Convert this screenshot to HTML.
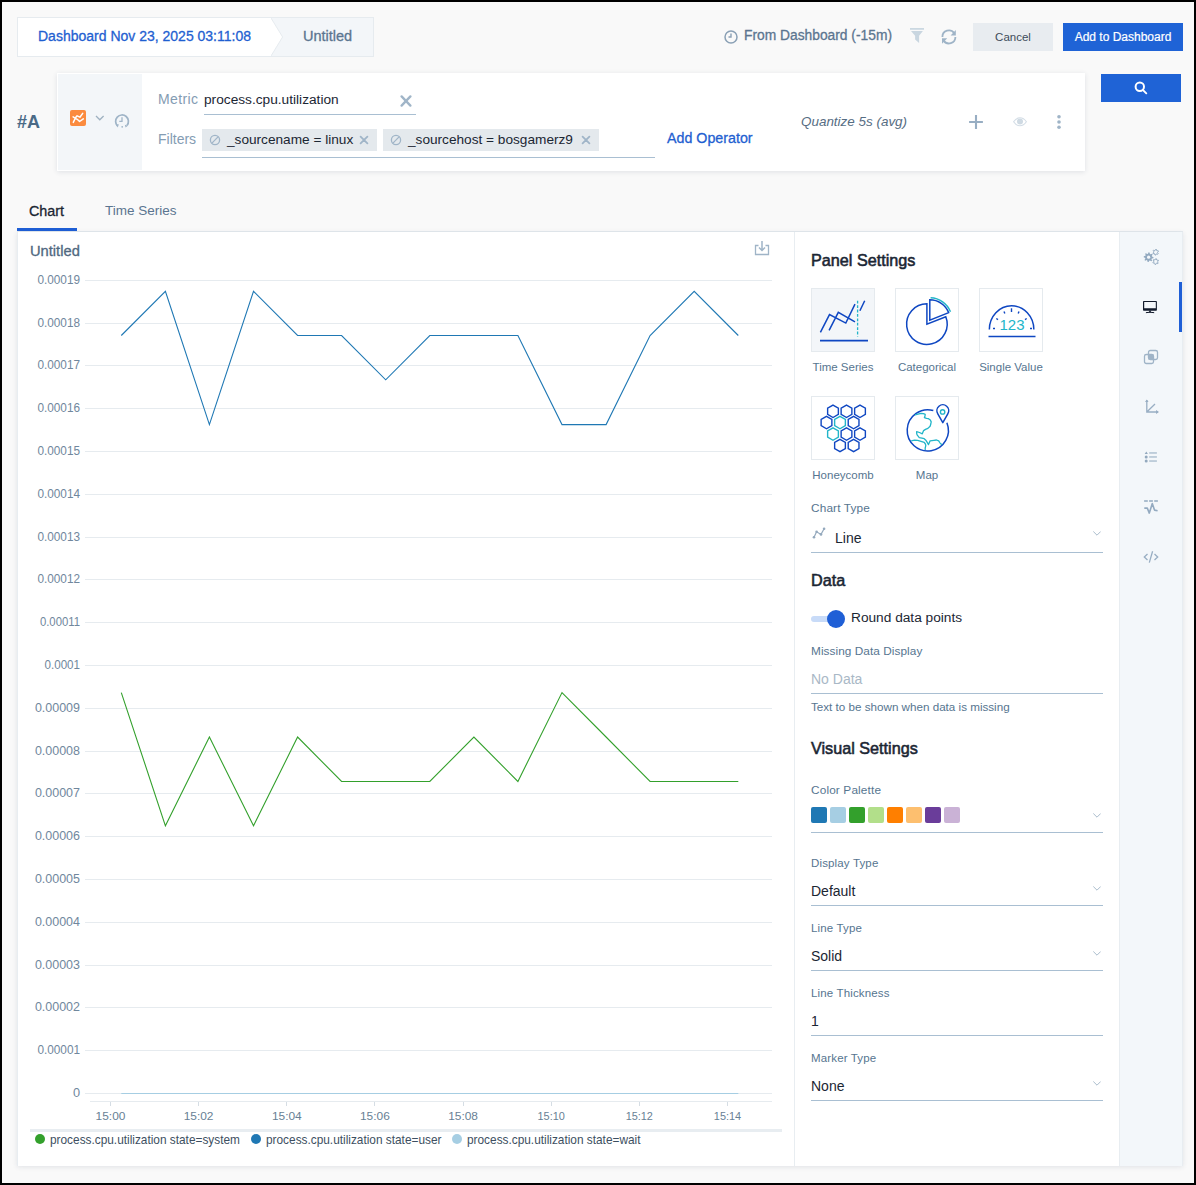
<!DOCTYPE html>
<html><head><meta charset="utf-8">
<style>
*{box-sizing:border-box;margin:0;padding:0}
html,body{width:1196px;height:1185px;overflow:hidden}
body{font-family:"Liberation Sans",sans-serif;background:#000;position:relative}
#frame{position:absolute;left:2px;top:2px;width:1192px;height:1181px;background:#f9f9f9;overflow:hidden}
.a{position:absolute;white-space:nowrap}
.m{-webkit-text-stroke:0.3px currentColor}
</style></head>
<body>
<div id="frame"></div>
<div class="a" id="root" style="left:0;top:0;width:1196px;height:1185px">

<!-- breadcrumb -->
<div class="a" style="left:17px;top:17px;width:357px;height:40px;background:#fff;border:1px solid #e6ebef"></div>
<svg class="a" style="left:271px;top:18px" width="102" height="38"><polygon points="0,0 102,0 102,38 0,38 11.6,19" fill="#f3f6f9"/><polyline points="0,0 11.6,19 0,38" fill="none" stroke="#e6ebef" stroke-width="1"/></svg>
<div class="a m" style="left:38px;top:27px;font-size:14px;color:#1f5fd1;line-height:18px">Dashboard Nov 23, 2025 03:11:08</div>
<div class="a m" style="left:303px;top:27px;font-size:14.5px;color:#5b7590;line-height:18px">Untitled</div>

<!-- top right -->
<svg class="a" style="left:724px;top:30px" width="14" height="14" viewBox="0 0 14 14"><circle cx="7" cy="7" r="6" fill="none" stroke="#8aa0b5" stroke-width="1.5"/><path d="M7 3.5V7H4.5" fill="none" stroke="#8aa0b5" stroke-width="1.4"/></svg>
<div class="a m" style="left:744px;top:27px;font-size:13.8px;color:#5b7590;line-height:18px">From Dashboard (-15m)</div>
<svg class="a" style="left:895px;top:20px" width="75" height="35" viewBox="0 0 75 35">
<path d="M15 8.9H29" stroke="#c9d6e0" stroke-width="1.7"/>
<path d="M16 11H27.9L24.1 15.7V22.9L20.1 19.6V15.7Z" fill="#c9d6e0"/>
<path d="M47.40 16.90A6.5 6.5 0 0 1 59.22 13.17" fill="none" stroke="#9fb4c7" stroke-width="1.8"/>
<path d="M60.40 16.90A6.5 6.5 0 0 1 48.58 20.63" fill="none" stroke="#9fb4c7" stroke-width="1.8"/>
<path d="M60.8 10V15.4H55.6Z" fill="#9fb4c7"/>
<path d="M47 18.2V23.8L52.2 18.2Z" fill="#9fb4c7"/>
</svg>
<div class="a" style="left:973px;top:23px;width:80px;height:28px;background:#e8ecf0;color:#3d4b5a;font-size:11.5px;line-height:28px;text-align:center">Cancel</div>
<div class="a m" style="left:1063px;top:23px;width:120px;height:28px;background:#1f63d6;color:#fff;font-size:12px;line-height:28px;text-align:center;-webkit-text-stroke:0.2px #fff">Add to Dashboard</div>

<!-- query row -->
<div class="a" style="left:17px;top:113px;font-size:18px;font-weight:bold;color:#4a6a86;line-height:18px">#A</div>
<div class="a" style="left:57px;top:73px;width:1028px;height:98px;background:#fff;box-shadow:0 1px 5px rgba(30,50,80,0.12)"></div>
<div class="a" style="left:58px;top:74px;width:84px;height:96px;background:#f3f6f9"></div>
<div class="a" style="left:70px;top:110px;width:16px;height:16px;background:#fb8b3f;border-radius:2px"></div>
<svg class="a" style="left:70px;top:110px" width="16" height="16" viewBox="0 0 16 16"><path d="M3.3 12.4L5.5 7.8L7.1 5.8L9.9 7.2L12.7 3.4M3.1 6.9L5.5 8.4L7.2 9.3L9.6 11.5L13.3 8.9" fill="none" stroke="#fff" stroke-width="1.5" stroke-linecap="round" stroke-linejoin="round"/></svg>
<svg class="a" style="left:95px;top:115px" width="10" height="6" viewBox="0 0 10 6"><path d="M1 1L4.8 4.8L8.6 1" fill="none" stroke="#9fb1c1" stroke-width="1.3"/></svg>
<svg class="a" style="left:114px;top:113px" width="16" height="16" viewBox="0 0 16 16"><path d="M3.6 13A6.4 6.4 0 1 1 13 12.4" fill="none" stroke="#9fb4c7" stroke-width="1.7"/><path d="M1.6 11.5L4.8 11.2L3.8 14.4Z" fill="#9fb4c7"/><path d="M8 4.2V8.4H5.3" fill="none" stroke="#9fb4c7" stroke-width="1.3"/><circle cx="8.2" cy="13.8" r="0.9" fill="#9fb4c7"/><path d="M10.8 11.8L11.6 14.6L13.8 12.8Z" fill="#9fb4c7"/></svg>
<div class="a" style="left:158px;top:91px;font-size:14px;color:#849cb3;line-height:16px;letter-spacing:0.4px">Metric</div>
<div class="a" style="left:204px;top:92px;font-size:13.7px;color:#1b2633;line-height:16px">process.cpu.utilization</div>
<div class="a" style="left:204px;top:114px;width:212px;height:1px;background:#a9bfd2"></div>
<svg class="a" style="left:400px;top:95px" width="12" height="12" viewBox="0 0 12 12"><path d="M1.6 1.4L10.4 10.6M10.4 1.4L1.6 10.6" stroke="#a0b5c8" stroke-width="2.3" stroke-linecap="round"/></svg>

<div class="a" style="left:158px;top:131px;font-size:14px;color:#849cb3;line-height:16px">Filters</div>
<div class="a" style="left:202px;top:129px;width:175px;height:22px;background:#e4e9ed"></div>
<div class="a" style="left:383px;top:129px;width:216px;height:22px;background:#e4e9ed"></div>
<div class="a" style="left:202px;top:157px;width:453px;height:1px;background:#a9bfd2"></div>
<!-- query row right part -->
<div class="a" style="left:227px;top:132px;font-size:13.65px;color:#1b2633;line-height:16px">_sourcename = linux</div>
<div class="a" style="left:408px;top:132px;font-size:13.65px;color:#1b2633;line-height:16px">_sourcehost = bosgamerz9</div>
<svg class="a" style="left:209px;top:134px" width="12" height="12" viewBox="0 0 12 12"><circle cx="6" cy="6" r="4.6" fill="none" stroke="#a0b5c8" stroke-width="1.3"/><path d="M2.9 9.1L9.1 2.9" stroke="#a0b5c8" stroke-width="1.3"/></svg>
<svg class="a" style="left:390px;top:134px" width="12" height="12" viewBox="0 0 12 12"><circle cx="6" cy="6" r="4.6" fill="none" stroke="#a0b5c8" stroke-width="1.3"/><path d="M2.9 9.1L9.1 2.9" stroke="#a0b5c8" stroke-width="1.3"/></svg>
<svg class="a" style="left:359px;top:135px" width="10" height="10" viewBox="0 0 10 10"><path d="M1.6 1.6L8.4 8.4M8.4 1.6L1.6 8.4" stroke="#a0b5c8" stroke-width="1.8" stroke-linecap="round"/></svg>
<svg class="a" style="left:581px;top:135px" width="10" height="10" viewBox="0 0 10 10"><path d="M1.6 1.6L8.4 8.4M8.4 1.6L1.6 8.4" stroke="#a0b5c8" stroke-width="1.8" stroke-linecap="round"/></svg>
<div class="a m" style="left:667px;top:130px;font-size:14.25px;color:#1f5fd1;line-height:16px">Add Operator</div>
<div class="a" style="left:801px;top:114px;font-size:13.45px;font-style:italic;color:#566d83;line-height:16px">Quantize 5s (avg)</div>
<svg class="a" style="left:968px;top:114px" width="16" height="16" viewBox="0 0 16 16"><path d="M8 1.1V14.9M1.1 8H14.9" stroke="#98aec3" stroke-width="2.1"/></svg>
<svg class="a" style="left:1012px;top:116px" width="16" height="12" viewBox="0 0 16 12"><path d="M1.6 5.8C3.5 3 5.6 1.8 8 1.8S12.5 3 14.4 5.8C12.5 8.6 10.4 9.8 8 9.8S3.5 8.6 1.6 5.8Z" fill="none" stroke="#d3dde6" stroke-width="1.1"/><circle cx="8" cy="5.6" r="3" fill="#cfdae3"/></svg>
<svg class="a" style="left:1056px;top:114px" width="6" height="16" viewBox="0 0 6 16"><circle cx="3" cy="2.7" r="1.8" fill="#9fb4c7"/><circle cx="3" cy="8" r="1.8" fill="#9fb4c7"/><circle cx="3" cy="13.3" r="1.8" fill="#9fb4c7"/></svg>
<div class="a" style="left:1101px;top:74px;width:80px;height:28px;background:#1f63d6"></div>
<svg class="a" style="left:1134px;top:81px" width="14" height="14" viewBox="0 0 14 14"><circle cx="5.8" cy="5.8" r="4.2" fill="none" stroke="#fff" stroke-width="2"/><path d="M8.8 8.8L12.3 12.3" stroke="#fff" stroke-width="1.9" stroke-linecap="round"/></svg>

<!-- tabs -->
<div class="a m" style="left:29px;top:203px;font-size:14.35px;color:#1b2633;line-height:16px">Chart</div>
<div class="a" style="left:105px;top:203px;font-size:13.5px;color:#5b7590;line-height:16px">Time Series</div>
<div class="a" style="left:17px;top:231px;width:1166px;height:1px;background:#e6ebef"></div>
<div class="a" style="left:17px;top:228px;width:60px;height:3px;background:#1f5fd6"></div>

<!-- main card -->
<div class="a" style="left:17px;top:232px;width:1166px;height:934px;background:#fff;box-shadow:0 1px 5px rgba(30,50,80,0.11);border-left:1px solid #e8edf1;border-right:1px solid #e8edf1"></div>
<div class="a" style="left:794px;top:232px;width:1px;height:934px;background:#e8edf1"></div>
<div class="a" style="left:1119px;top:232px;width:63px;height:934px;background:#f3f7fa;border-left:1px solid #e8edf1"></div>
<div class="a" style="left:1179px;top:282px;width:3px;height:50px;background:#1f5fd6"></div>

<div class="a m" style="left:30px;top:243px;font-size:14.7px;color:#4f6880;line-height:16px">Untitled</div>
<svg class="a" style="left:754px;top:240px" width="16" height="16" viewBox="0 0 16 16"><path d="M4.5 5.5H1.5V14.5H14.5V5.5H11.5" fill="none" stroke="#9fb4c7" stroke-width="1.3"/><path d="M8 1V10M5 7.5L8 10.5L11 7.5" fill="none" stroke="#9fb4c7" stroke-width="1.5"/></svg>
<svg class="a" style="left:0;top:0" width="1196" height="1185" viewBox="0 0 1196 1185">
<line x1="85" y1="1093.5" x2="772" y2="1093.5" stroke="#e6ebef" stroke-width="1"/>
<text x="80" y="1097" text-anchor="end" font-size="11.9" fill="#70879d" textLength="7.1" lengthAdjust="spacingAndGlyphs">0</text>
<line x1="85" y1="1050.5" x2="772" y2="1050.5" stroke="#e6ebef" stroke-width="1"/>
<text x="80" y="1054" text-anchor="end" font-size="11.9" fill="#70879d" textLength="42.6" lengthAdjust="spacingAndGlyphs">0.00001</text>
<line x1="85" y1="1007.5" x2="772" y2="1007.5" stroke="#e6ebef" stroke-width="1"/>
<text x="80" y="1011" text-anchor="end" font-size="11.9" fill="#70879d" textLength="45.1" lengthAdjust="spacingAndGlyphs">0.00002</text>
<line x1="85" y1="965.5" x2="772" y2="965.5" stroke="#e6ebef" stroke-width="1"/>
<text x="80" y="969" text-anchor="end" font-size="11.9" fill="#70879d" textLength="45.1" lengthAdjust="spacingAndGlyphs">0.00003</text>
<line x1="85" y1="922.5" x2="772" y2="922.5" stroke="#e6ebef" stroke-width="1"/>
<text x="80" y="926" text-anchor="end" font-size="11.9" fill="#70879d" textLength="45.1" lengthAdjust="spacingAndGlyphs">0.00004</text>
<line x1="85" y1="879.5" x2="772" y2="879.5" stroke="#e6ebef" stroke-width="1"/>
<text x="80" y="883" text-anchor="end" font-size="11.9" fill="#70879d" textLength="45.1" lengthAdjust="spacingAndGlyphs">0.00005</text>
<line x1="85" y1="836.5" x2="772" y2="836.5" stroke="#e6ebef" stroke-width="1"/>
<text x="80" y="840" text-anchor="end" font-size="11.9" fill="#70879d" textLength="45.1" lengthAdjust="spacingAndGlyphs">0.00006</text>
<line x1="85" y1="793.5" x2="772" y2="793.5" stroke="#e6ebef" stroke-width="1"/>
<text x="80" y="797" text-anchor="end" font-size="11.9" fill="#70879d" textLength="45.1" lengthAdjust="spacingAndGlyphs">0.00007</text>
<line x1="85" y1="751.5" x2="772" y2="751.5" stroke="#e6ebef" stroke-width="1"/>
<text x="80" y="755" text-anchor="end" font-size="11.9" fill="#70879d" textLength="45.1" lengthAdjust="spacingAndGlyphs">0.00008</text>
<line x1="85" y1="708.5" x2="772" y2="708.5" stroke="#e6ebef" stroke-width="1"/>
<text x="80" y="712" text-anchor="end" font-size="11.9" fill="#70879d" textLength="45.1" lengthAdjust="spacingAndGlyphs">0.00009</text>
<line x1="85" y1="665.5" x2="772" y2="665.5" stroke="#e6ebef" stroke-width="1"/>
<text x="80" y="669" text-anchor="end" font-size="11.9" fill="#70879d" textLength="35.5" lengthAdjust="spacingAndGlyphs">0.0001</text>
<line x1="85" y1="622.5" x2="772" y2="622.5" stroke="#e6ebef" stroke-width="1"/>
<text x="80" y="626" text-anchor="end" font-size="11.9" fill="#70879d" textLength="40.1" lengthAdjust="spacingAndGlyphs">0.00011</text>
<line x1="85" y1="579.5" x2="772" y2="579.5" stroke="#e6ebef" stroke-width="1"/>
<text x="80" y="583" text-anchor="end" font-size="11.9" fill="#70879d" textLength="42.6" lengthAdjust="spacingAndGlyphs">0.00012</text>
<line x1="85" y1="537.5" x2="772" y2="537.5" stroke="#e6ebef" stroke-width="1"/>
<text x="80" y="541" text-anchor="end" font-size="11.9" fill="#70879d" textLength="42.6" lengthAdjust="spacingAndGlyphs">0.00013</text>
<line x1="85" y1="494.5" x2="772" y2="494.5" stroke="#e6ebef" stroke-width="1"/>
<text x="80" y="498" text-anchor="end" font-size="11.9" fill="#70879d" textLength="42.6" lengthAdjust="spacingAndGlyphs">0.00014</text>
<line x1="85" y1="451.5" x2="772" y2="451.5" stroke="#e6ebef" stroke-width="1"/>
<text x="80" y="455" text-anchor="end" font-size="11.9" fill="#70879d" textLength="42.6" lengthAdjust="spacingAndGlyphs">0.00015</text>
<line x1="85" y1="408.5" x2="772" y2="408.5" stroke="#e6ebef" stroke-width="1"/>
<text x="80" y="412" text-anchor="end" font-size="11.9" fill="#70879d" textLength="42.6" lengthAdjust="spacingAndGlyphs">0.00016</text>
<line x1="85" y1="365.5" x2="772" y2="365.5" stroke="#e6ebef" stroke-width="1"/>
<text x="80" y="369" text-anchor="end" font-size="11.9" fill="#70879d" textLength="42.6" lengthAdjust="spacingAndGlyphs">0.00017</text>
<line x1="85" y1="323.5" x2="772" y2="323.5" stroke="#e6ebef" stroke-width="1"/>
<text x="80" y="327" text-anchor="end" font-size="11.9" fill="#70879d" textLength="42.6" lengthAdjust="spacingAndGlyphs">0.00018</text>
<line x1="85" y1="280.5" x2="772" y2="280.5" stroke="#e6ebef" stroke-width="1"/>
<text x="80" y="284" text-anchor="end" font-size="11.9" fill="#70879d" textLength="42.6" lengthAdjust="spacingAndGlyphs">0.00019</text>
<line x1="90" y1="1101.5" x2="772" y2="1101.5" stroke="#e6ebef" stroke-width="1"/>
<line x1="110.5" y1="1102" x2="110.5" y2="1106" stroke="#d5dde4" stroke-width="1"/>
<text x="110.5" y="1120" text-anchor="middle" font-size="11.5" fill="#687f95" textLength="29.8" lengthAdjust="spacingAndGlyphs">15:00</text>
<line x1="198.5" y1="1102" x2="198.5" y2="1106" stroke="#d5dde4" stroke-width="1"/>
<text x="198.6" y="1120" text-anchor="middle" font-size="11.5" fill="#687f95" textLength="29.8" lengthAdjust="spacingAndGlyphs">15:02</text>
<line x1="286.5" y1="1102" x2="286.5" y2="1106" stroke="#d5dde4" stroke-width="1"/>
<text x="286.8" y="1120" text-anchor="middle" font-size="11.5" fill="#687f95" textLength="29.8" lengthAdjust="spacingAndGlyphs">15:04</text>
<line x1="374.5" y1="1102" x2="374.5" y2="1106" stroke="#d5dde4" stroke-width="1"/>
<text x="374.9" y="1120" text-anchor="middle" font-size="11.5" fill="#687f95" textLength="29.8" lengthAdjust="spacingAndGlyphs">15:06</text>
<line x1="463.5" y1="1102" x2="463.5" y2="1106" stroke="#d5dde4" stroke-width="1"/>
<text x="463.1" y="1120" text-anchor="middle" font-size="11.5" fill="#687f95" textLength="29.8" lengthAdjust="spacingAndGlyphs">15:08</text>
<line x1="551.5" y1="1102" x2="551.5" y2="1106" stroke="#d5dde4" stroke-width="1"/>
<text x="551.2" y="1120" text-anchor="middle" font-size="11.5" fill="#687f95" textLength="27.3" lengthAdjust="spacingAndGlyphs">15:10</text>
<line x1="639.5" y1="1102" x2="639.5" y2="1106" stroke="#d5dde4" stroke-width="1"/>
<text x="639.3" y="1120" text-anchor="middle" font-size="11.5" fill="#687f95" textLength="27.3" lengthAdjust="spacingAndGlyphs">15:12</text>
<line x1="727.5" y1="1102" x2="727.5" y2="1106" stroke="#d5dde4" stroke-width="1"/>
<text x="727.5" y="1120" text-anchor="middle" font-size="11.5" fill="#687f95" textLength="27.3" lengthAdjust="spacingAndGlyphs">15:14</text>
<polyline points="121.3,1093.5 738.3,1093.5" fill="none" stroke="#a6cee3" stroke-width="1.2"/>
<polyline points="121.3,692.6 165.4,825.8 209.4,737.0 253.5,825.8 297.6,737.0 341.6,781.5 385.7,781.5 429.8,781.5 473.9,737.0 517.9,781.5 562.0,692.6 606.1,737.0 650.1,781.5 694.2,781.5 738.3,781.5" fill="none" stroke="#33a02c" stroke-width="1.1"/>
<polyline points="121.3,335.5 165.4,291.3 209.4,424.6 253.5,291.3 297.6,335.5 341.6,335.5 385.7,379.8 429.8,335.5 473.9,335.5 517.9,335.5 562.0,424.6 606.1,424.6 650.1,335.5 694.2,291.3 738.3,335.5" fill="none" stroke="#1f78b4" stroke-width="1.1"/>
</svg>
<!-- legend -->
<div class="a" style="left:30px;top:1129px;width:752px;height:3px;background:#e8edf1"></div>
<div class="a" style="left:35px;top:1134px;width:10px;height:10px;border-radius:50%;background:#33a02c"></div>
<div class="a" style="left:50px;top:1133px;font-size:11.85px;color:#3d4f61;line-height:14px">process.cpu.utilization state=system</div>
<div class="a" style="left:251px;top:1134px;width:10px;height:10px;border-radius:50%;background:#1f78b4"></div>
<div class="a" style="left:266px;top:1133px;font-size:11.85px;color:#3d4f61;line-height:14px">process.cpu.utilization state=user</div>
<div class="a" style="left:452px;top:1134px;width:10px;height:10px;border-radius:50%;background:#a6cee3"></div>
<div class="a" style="left:467px;top:1133px;font-size:11.85px;color:#3d4f61;line-height:14px">process.cpu.utilization state=wait</div>

<!-- settings panel -->
<div class="a" style="left:811px;top:251px;font-size:16.2px;-webkit-text-stroke:0.55px currentColor;color:#1b2633;line-height:18px">Panel Settings</div>

<div class="a" style="left:811px;top:288px;width:64px;height:64px;background:#f3f6f9;border:1px solid #e5eaee"></div>
<div class="a" style="left:895px;top:288px;width:64px;height:64px;background:#fff;border:1px solid #e5eaee"></div>
<div class="a" style="left:979px;top:288px;width:64px;height:64px;background:#fff;border:1px solid #e5eaee"></div>
<div class="a" style="left:811px;top:396px;width:64px;height:64px;background:#fff;border:1px solid #e5eaee"></div>
<div class="a" style="left:895px;top:396px;width:64px;height:64px;background:#fff;border:1px solid #e5eaee"></div>

<!-- time series icon -->
<svg class="a" style="left:811px;top:288px" width="64" height="64" viewBox="0 0 64 64">
<path d="M9 52.7H57" stroke="#0f47c2" stroke-width="1.8"/>
<path d="M9.4 44.3L18.5 26.6L34.8 35.1L44 16.2M18.1 42.3L27.3 24.4L44 33.8M48.9 22.7L53.7 12.7" fill="none" stroke="#0f47c2" stroke-width="1.5"/>
<path d="M46.6 12.8V48.6" stroke="#22b5c9" stroke-width="1.3" stroke-dasharray="2.8 1.6"/>
</svg>
<!-- categorical icon -->
<svg class="a" style="left:895px;top:288px" width="64" height="64" viewBox="0 0 64 64">
<path d="M31.9 15.8V36.1L50.8 28.7A20.3 20.3 0 1 1 31.9 15.8Z" fill="none" stroke="#0f47c2" stroke-width="1.5" stroke-linejoin="miter"/>
<path d="M34.8 11.8V32.1L53.7 24.7A20.3 20.3 0 0 0 34.8 11.8Z" fill="none" stroke="#0f47c2" stroke-width="1.5"/>
<path d="M35.6 9.8A22.3 22.3 0 0 1 55.5 23.7" fill="none" stroke="#22b5c9" stroke-width="1.5"/>
</svg>
<!-- single value icon -->
<svg class="a" style="left:979px;top:288px" width="64" height="64" viewBox="0 0 64 64">
<path d="M10.35 41.6A22.25 23.8 0 0 1 54.85 41.6" fill="none" stroke="#0f47c2" stroke-width="1.5"/>
<path d="M9.5 48.5H56.5" stroke="#0f47c2" stroke-width="1.5"/>
<g stroke="#0f47c2" stroke-width="1.4">
<path d="M14 40.5H16"/><path d="M51 40.5H53"/>
<path d="M17.3 30.5L19 31.6"/><path d="M47.7 30.5L46 31.6"/>
<path d="M25 23.5L25.8 25.5"/><path d="M40 23.5L39.2 25.5"/>
<path d="M32.5 20.3V24"/>
</g>
<text x="33" y="42" text-anchor="middle" font-size="15" fill="#22b5c9" font-family="Liberation Sans">123</text>
</svg>
<!-- honeycomb icon -->
<svg class="a" style="left:811px;top:396px" width="64" height="64" viewBox="0 0 64 64" id="hc"><polygon points="22.00,9.10 27.37,12.20 27.37,18.40 22.00,21.50 16.63,18.40 16.63,12.20" fill="none" stroke="#0f47c2" stroke-width="1.4"/><polygon points="35.50,9.10 40.87,12.20 40.87,18.40 35.50,21.50 30.13,18.40 30.13,12.20" fill="none" stroke="#0f47c2" stroke-width="1.4"/><polygon points="49.00,9.10 54.37,12.20 54.37,18.40 49.00,21.50 43.63,18.40 43.63,12.20" fill="none" stroke="#0f47c2" stroke-width="1.4"/><polygon points="15.50,20.40 20.87,23.50 20.87,29.70 15.50,32.80 10.13,29.70 10.13,23.50" fill="none" stroke="#0f47c2" stroke-width="1.4"/><polygon points="29.00,20.40 34.37,23.50 34.37,29.70 29.00,32.80 23.63,29.70 23.63,23.50" fill="none" stroke="#22b5c9" stroke-width="1.4"/><polygon points="42.60,20.40 47.97,23.50 47.97,29.70 42.60,32.80 37.23,29.70 37.23,23.50" fill="none" stroke="#0f47c2" stroke-width="1.4"/><polygon points="22.00,31.90 27.37,35.00 27.37,41.20 22.00,44.30 16.63,41.20 16.63,35.00" fill="none" stroke="#22b5c9" stroke-width="1.4"/><polygon points="35.50,31.90 40.87,35.00 40.87,41.20 35.50,44.30 30.13,41.20 30.13,35.00" fill="none" stroke="#0f47c2" stroke-width="1.4"/><polygon points="49.00,31.90 54.37,35.00 54.37,41.20 49.00,44.30 43.63,41.20 43.63,35.00" fill="none" stroke="#0f47c2" stroke-width="1.4"/><polygon points="29.00,43.30 34.37,46.40 34.37,52.60 29.00,55.70 23.63,52.60 23.63,46.40" fill="none" stroke="#0f47c2" stroke-width="1.4"/><polygon points="42.60,43.30 47.97,46.40 47.97,52.60 42.60,55.70 37.23,52.60 37.23,46.40" fill="none" stroke="#0f47c2" stroke-width="1.4"/></svg>
<!-- map icon -->
<svg class="a" style="left:895px;top:396px" width="64" height="64" viewBox="0 0 64 64">
<path d="M38.31 14.55A20.6 20.6 0 1 0 51.89 26.67" fill="none" stroke="#0f47c2" stroke-width="1.5"/>
<path d="M47.8 26.6L42.8 17.8A5.9 5.9 0 1 1 52.8 17.8Z" fill="none" stroke="#0f47c2" stroke-width="1.5" stroke-linejoin="round"/>
<circle cx="47.6" cy="15.9" r="2.2" fill="none" stroke="#22b5c9" stroke-width="1.4"/>
<path d="M20 18.9L23 18.2L25.9 17.3L28.5 17.6L30.2 18.4L30 20L29.4 21.6L31.5 22.3L33.5 22.7L35.3 24L36.2 25.9L35.8 28L35.1 30.2L32.9 32.4L30.5 33.4L28.6 34.6L27.3 37.8L24.5 36.5L21.6 35.6L21.7 37.5L22.1 38.9L24.3 41.6L27 42.2L29.2 42.7L30.8 44.2L31.9 45.9L33.5 48.6L34.5 46.2L35.1 44.8L38.9 44.3L41.5 44L43.7 44.8L44.7 46.5L45.4 47.5L47 48.6" fill="none" stroke="#22b5c9" stroke-width="1.3" stroke-linejoin="round"/>
<path d="M16.2 44.8L19.5 44.2L22.7 44.3L26 45.3L29.2 46.4L30.4 48L30.8 49.7L30.2 52L30.2 54" fill="none" stroke="#22b5c9" stroke-width="1.3" stroke-linejoin="round"/>
</svg>

<div class="a" style="left:811px;top:360px;width:64px;text-align:center;font-size:11.5px;color:#567590;line-height:14px">Time Series</div>
<div class="a" style="left:895px;top:360px;width:64px;text-align:center;font-size:11.5px;color:#567590;line-height:14px">Categorical</div>
<div class="a" style="left:971px;top:360px;width:80px;text-align:center;font-size:11.5px;color:#567590;line-height:14px">Single Value</div>
<div class="a" style="left:803px;top:468px;width:80px;text-align:center;font-size:11.5px;color:#567590;line-height:14px">Honeycomb</div>
<div class="a" style="left:895px;top:468px;width:64px;text-align:center;font-size:11.5px;color:#567590;line-height:14px">Map</div>

<div class="a" style="left:811px;top:501px;font-size:11.8px;color:#567590;line-height:14px;letter-spacing:0.15px">Chart Type</div>
<svg class="a" style="left:808px;top:522px" width="24" height="20" viewBox="0 0 24 20"><path d="M6 15.3L8.6 9.8L13 12.4L16.1 6.8" fill="none" stroke="#94a9bd" stroke-width="1.2"/><g fill="#94a9bd"><circle cx="6" cy="15.3" r="1.3"/><circle cx="8.6" cy="9.8" r="1.3"/><circle cx="13" cy="12.4" r="1.3"/><circle cx="16.1" cy="6.8" r="1.3"/></g></svg>
<div class="a" style="left:835px;top:530px;font-size:14px;color:#1b2633;line-height:16px">Line</div>
<svg class="a" style="left:1093px;top:531px" width="8" height="5" viewBox="0 0 8 5"><path d="M0.3 0.5L4 4.2L7.7 0.5" fill="none" stroke="#a9bccc" stroke-width="1"/></svg>
<div class="a" style="left:811px;top:552px;width:292px;height:1px;background:#a9bfd2"></div>

<div class="a" style="left:811px;top:571px;font-size:16.2px;-webkit-text-stroke:0.55px currentColor;color:#1b2633;line-height:18px">Data</div>
<div class="a" style="left:811px;top:616px;width:26px;height:6px;border-radius:3px;background:#c8dbf8"></div>
<div class="a" style="left:827px;top:610px;width:18px;height:18px;border-radius:50%;background:#1f5fd6"></div>
<div class="a" style="left:851px;top:610px;font-size:13.7px;color:#1b2633;line-height:16px">Round data points</div>

<div class="a" style="left:811px;top:644px;font-size:11.8px;color:#567590;line-height:14px;letter-spacing:0.06px">Missing Data Display</div>
<div class="a" style="left:811px;top:671px;font-size:14px;color:#a9b8c6;line-height:16px">No Data</div>
<div class="a" style="left:811px;top:693px;width:292px;height:1px;background:#a9bfd2"></div>
<div class="a" style="left:811px;top:700px;font-size:11.65px;color:#567590;line-height:14px">Text to be shown when data is missing</div>

<div class="a" style="left:811px;top:739px;font-size:16.2px;-webkit-text-stroke:0.55px currentColor;color:#1b2633;line-height:18px">Visual Settings</div>

<div class="a" style="left:811px;top:783px;font-size:11.8px;color:#567590;line-height:14px;letter-spacing:0.15px">Color Palette</div>
<div class="a" style="left:811px;top:807px;width:16px;height:16px;border-radius:2px;background:#1f78b4"></div>
<div class="a" style="left:830px;top:807px;width:16px;height:16px;border-radius:2px;background:#a6cee3"></div>
<div class="a" style="left:849px;top:807px;width:16px;height:16px;border-radius:2px;background:#33a02c"></div>
<div class="a" style="left:868px;top:807px;width:16px;height:16px;border-radius:2px;background:#b2df8a"></div>
<div class="a" style="left:887px;top:807px;width:16px;height:16px;border-radius:2px;background:#ff7f00"></div>
<div class="a" style="left:906px;top:807px;width:16px;height:16px;border-radius:2px;background:#fdbf6f"></div>
<div class="a" style="left:925px;top:807px;width:16px;height:16px;border-radius:2px;background:#6a3d9a"></div>
<div class="a" style="left:944px;top:807px;width:16px;height:16px;border-radius:2px;background:#cab2d6"></div>
<svg class="a" style="left:1093px;top:813px" width="8" height="5" viewBox="0 0 8 5"><path d="M0.3 0.5L4 4.2L7.7 0.5" fill="none" stroke="#a9bccc" stroke-width="1"/></svg>
<div class="a" style="left:811px;top:832px;width:292px;height:1px;background:#a9bfd2"></div>

<div class="a" style="left:811px;top:856px;font-size:11.5px;color:#567590;line-height:14px;letter-spacing:0.15px">Display Type</div>
<div class="a" style="left:811px;top:883px;font-size:14px;color:#1b2633;line-height:16px">Default</div>
<svg class="a" style="left:1093px;top:886px" width="8" height="5" viewBox="0 0 8 5"><path d="M0.3 0.5L4 4.2L7.7 0.5" fill="none" stroke="#a9bccc" stroke-width="1"/></svg>
<div class="a" style="left:811px;top:905px;width:292px;height:1px;background:#a9bfd2"></div>

<div class="a" style="left:811px;top:921px;font-size:11.5px;color:#567590;line-height:14px;letter-spacing:0.15px">Line Type</div>
<div class="a" style="left:811px;top:948px;font-size:14px;color:#1b2633;line-height:16px">Solid</div>
<svg class="a" style="left:1093px;top:951px" width="8" height="5" viewBox="0 0 8 5"><path d="M0.3 0.5L4 4.2L7.7 0.5" fill="none" stroke="#a9bccc" stroke-width="1"/></svg>
<div class="a" style="left:811px;top:970px;width:292px;height:1px;background:#a9bfd2"></div>

<div class="a" style="left:811px;top:986px;font-size:11.5px;color:#567590;line-height:14px;letter-spacing:0.15px">Line Thickness</div>
<div class="a" style="left:811px;top:1013px;font-size:14px;color:#1b2633;line-height:16px">1</div>
<div class="a" style="left:811px;top:1035px;width:292px;height:1px;background:#a9bfd2"></div>

<div class="a" style="left:811px;top:1051px;font-size:11.5px;color:#567590;line-height:14px;letter-spacing:0.15px">Marker Type</div>
<div class="a" style="left:811px;top:1078px;font-size:14px;color:#1b2633;line-height:16px">None</div>
<svg class="a" style="left:1093px;top:1081px" width="8" height="5" viewBox="0 0 8 5"><path d="M0.3 0.5L4 4.2L7.7 0.5" fill="none" stroke="#a9bccc" stroke-width="1"/></svg>
<div class="a" style="left:811px;top:1100px;width:292px;height:1px;background:#a9bfd2"></div>

<!-- sidebar icons -->
<svg class="a" style="left:1143px;top:249px" width="16" height="16" viewBox="0 0 16 16"><path d="M5.60,3.30 L6.56,3.39 L6.94,4.97 L7.54,5.29 L9.06,4.74 L9.67,5.48 L8.83,6.86 L9.03,7.52 L10.50,8.20 L10.41,9.16 L8.83,9.54 L8.51,10.14 L9.06,11.66 L8.32,12.27 L6.94,11.43 L6.28,11.63 L5.60,13.10 L4.64,13.01 L4.26,11.43 L3.66,11.11 L2.14,11.66 L1.53,10.92 L2.37,9.54 L2.17,8.88 L0.70,8.20 L0.79,7.24 L2.37,6.86 L2.69,6.26 L2.14,4.74 L2.88,4.13 L4.26,4.97 L4.92,4.77Z" fill="#93aac0"/><circle cx="5.6" cy="8.2" r="1.6" fill="#f3f7fa"/><path d="M12.70,0.30 L13.45,0.40 L13.65,1.55 L14.04,1.86 L15.21,1.75 L15.50,2.45 L14.60,3.20 L14.54,3.69 L15.21,4.65 L14.75,5.25 L13.65,4.85 L13.19,5.04 L12.70,6.10 L11.95,6.00 L11.75,4.85 L11.36,4.54 L10.19,4.65 L9.90,3.95 L10.80,3.20 L10.86,2.71 L10.19,1.75 L10.65,1.15 L11.75,1.55 L12.21,1.36Z" fill="none" stroke="#93aac0" stroke-width="1"/><path d="M12.70,9.70 L13.45,9.80 L13.65,10.95 L14.04,11.26 L15.21,11.15 L15.50,11.85 L14.60,12.60 L14.54,13.09 L15.21,14.05 L14.75,14.65 L13.65,14.25 L13.19,14.44 L12.70,15.50 L11.95,15.40 L11.75,14.25 L11.36,13.94 L10.19,14.05 L9.90,13.35 L10.80,12.60 L10.86,12.11 L10.19,11.15 L10.65,10.55 L11.75,10.95 L12.21,10.76Z" fill="none" stroke="#93aac0" stroke-width="1"/></svg>
<svg class="a" style="left:1136px;top:292px" width="30" height="28" viewBox="0 0 30 28"><path d="M7.8 8.9H20.1Q20.9 8.9 20.9 9.7V17.9Q20.9 18.7 20.1 18.7H7.8Q7 18.7 7 17.9V9.7Q7 8.9 7.8 8.9ZM8.2 10.1V16.3H19.8V10.1Z" fill="#111a2b" fill-rule="evenodd"/><rect x="13.2" y="18.5" width="1.6" height="2" fill="#111a2b"/><path d="M10.3 20.6Q14 19.8 17.8 20.6" fill="none" stroke="#111a2b" stroke-width="1" stroke-linecap="round"/></svg>
<svg class="a" style="left:1143px;top:349px" width="16" height="16" viewBox="0 0 16 16"><rect x="5.5" y="1.5" width="9" height="9" rx="1.8" fill="none" stroke="#9fb4c7" stroke-width="1.3"/><rect x="1.5" y="5.5" width="9" height="9" rx="1.8" fill="none" stroke="#9fb4c7" stroke-width="1.3"/><rect x="5.5" y="5.5" width="5" height="5" fill="#9fb4c7"/></svg>
<svg class="a" style="left:1145px;top:399px" width="15" height="15" viewBox="0 0 15 15"><path d="M1.8 1V13H13M1.8 13L10 5" fill="none" stroke="#98aec3" stroke-width="1.3"/><path d="M0 3L1.8 0.5L3.6 3Z M11 11L14 13L11 15Z" fill="#98aec3"/></svg>
<svg class="a" style="left:1136px;top:444px" width="30" height="26" viewBox="0 0 30 26"><g fill="#b7c8d6"><rect x="13.2" y="8.1" width="7.7" height="1.7"/><rect x="13.2" y="12.1" width="7.7" height="1.7"/><rect x="13.2" y="16.2" width="7.7" height="1.7"/></g><g fill="#93a9be"><path d="M10.3 7.6L8.7 10H11.9Z"/><circle cx="10.2" cy="13" r="1.5"/><circle cx="10.2" cy="17.1" r="1.5"/></g></svg>
<svg class="a" style="left:1138px;top:494px" width="26" height="24" viewBox="0 0 26 24"><g stroke="#93aac0" stroke-width="1.6" fill="none"><path d="M6.1 7H9.8M11.1 7H14.9M16.2 7H19.9"/><path d="M6.3 14.1H9.3L11.3 19.1L14.3 9.6L16.5 16.1L19.6 16.7" stroke-linejoin="round"/></g></svg>
<svg class="a" style="left:1136px;top:542px" width="30" height="28" viewBox="0 0 30 28"><path d="M11.5 12L8.3 15L11.5 18M18.5 12L21.7 15L18.5 18M16.6 9.3L13.3 20.6" fill="none" stroke="#98aec3" stroke-width="1.3"/></svg>
</div>
</body></html>
